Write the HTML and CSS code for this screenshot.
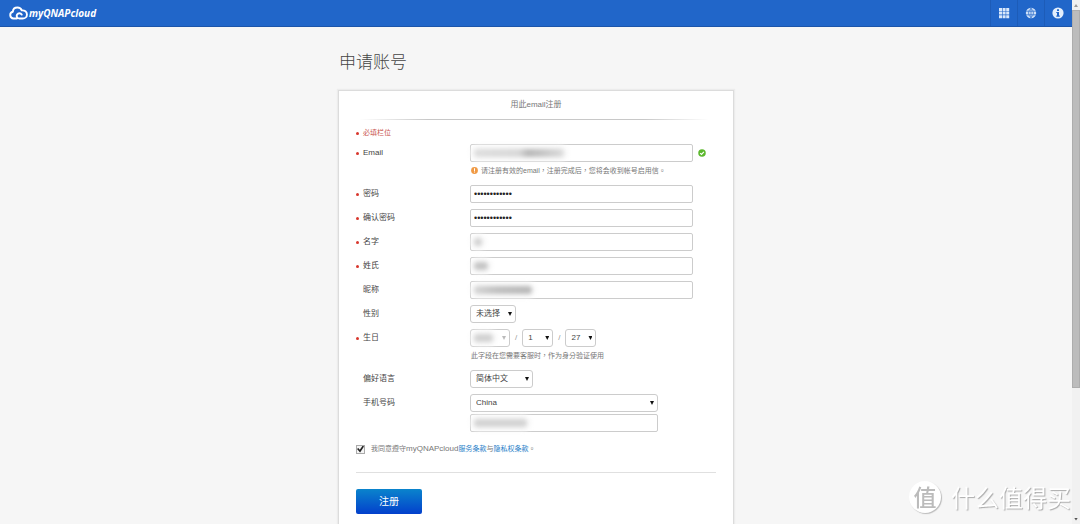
FILE: index.html
```html
<!DOCTYPE html>
<html lang="zh-Hans">
<head>
<meta charset="utf-8">
<title>myQNAPcloud - 申请账号</title>
<meta name="viewport" content="width=device-width, initial-scale=1">
<link rel="stylesheet" href="styles.css">
</head>
<body>
<div class="view">
  <header class="topbar">
    <a class="brand" href="#">
      <svg class="brand-mark" viewBox="0 0 36 26" aria-hidden="true"><path d="M15 23.500H8.500a6.500 6.500 0 0 1-1.200-12.800C7.500 5.500 11.500 2.500 16 2.500c4 0 7 2.200 8.200 5.600 5.600-.6 9.800 2.800 9.800 7.600 0 4.600-3.600 7.800-8 7.800h-6.500a5 5 0 1 1 4.500-7.500" fill="none" stroke="#fff" stroke-width="3.600" stroke-linecap="round" stroke-linejoin="round"/></svg>
      <span>myQNAPcloud</span>
    </a>
    <nav class="tools">
      <button class="tool" type="button" aria-label="应用">
        <svg viewBox="0 0 12 12"><path d="M1 1h3v3H1zM4.600 1h3v3h-3zM8.200 1h3v3h-3zM1 4.600h3v3H1zM4.600 4.600h3v3h-3zM8.200 4.600h3v3h-3zM1 8.200h3v3H1zM4.600 8.200h3v3h-3zM8.200 8.200h3v3h-3z" fill="#d9e8fb"/></svg>
      </button>
      <button class="tool" type="button" aria-label="语言">
        <svg viewBox="0 0 12 12"><circle cx="6" cy="6" r="5.200" fill="#cfe1f8"/><path d="M1 4.200h10M1 7.800h10M6 1v10M6 1.400c-3.200 2.600-3.200 6.600 0 9.200M6 1.400c3.200 2.600 3.200 6.600 0 9.200" fill="none" stroke="#2166c9" stroke-width=".7"/></svg>
      </button>
      <button class="tool" type="button" aria-label="信息">
        <svg viewBox="0 0 12 12"><circle cx="6" cy="6" r="5.600" fill="#e3eefc"/><path d="M5 2.200h2v1.700H5zM4.300 4.900H7v3.700h.8v1.100H4.300V8.600H5V6h-.7z" fill="#2166c9"/></svg>
      </button>
    </nav>
  </header>

  <main class="page">
    <h1 class="page-title">申请账号</h1>
    <form class="card">
      <h2 class="card-title">用此email注册</h2>
      <p class="note required">必填栏位</p>

      <div class="fields">
        <div class="row">
          <label class="label required" for="email">Email</label>
          <div class="control">
            <div class="line">
              <span class="box"><input class="input" id="email" type="email"><i class="smudge smudge-email"></i></span>
              <svg class="ok" viewBox="0 0 16 16" aria-hidden="true"><circle cx="8" cy="8" r="7.500" fill="#5cb82e"/><path d="M4.300 8.200l2.700 2.700 4.800-5" fill="none" stroke="#fff" stroke-width="2.400"/></svg>
            </div>
            <p class="hint" lang="zh-TW"><svg class="warn" viewBox="0 0 14 14" aria-hidden="true"><circle cx="7" cy="7" r="6.800" fill="#f09a45"/><path d="M6 2.600h2v5.200H6zM6 9h2v2H6z" fill="#fff"/></svg>请注册有效的email，注册完成后，您将会收到帐号启用信。</p>
          </div>
        </div>
        <div class="row">
          <label class="label required" for="pw">密码</label>
          <div class="control"><span class="box"><input class="input" id="pw" type="password" value="abcdefghijkl"></span></div>
        </div>
        <div class="row">
          <label class="label required" for="pw2">确认密码</label>
          <div class="control"><span class="box"><input class="input" id="pw2" type="password" value="abcdefghijkl"></span></div>
        </div>
        <div class="row">
          <label class="label required" for="first">名字</label>
          <div class="control"><span class="box"><input class="input" id="first" type="text"><i class="smudge smudge-first"></i></span></div>
        </div>
        <div class="row">
          <label class="label required" for="last">姓氏</label>
          <div class="control"><span class="box"><input class="input" id="last" type="text"><i class="smudge smudge-last"></i></span></div>
        </div>
        <div class="row">
          <label class="label" for="nick">昵称</label>
          <div class="control"><span class="box"><input class="input" id="nick" type="text"><i class="smudge smudge-nick"></i></span></div>
        </div>
        <div class="row">
          <label class="label" for="sex">性别</label>
          <div class="control"><span class="pick pick-sex"><select class="select" id="sex"><option>未选择</option></select></span></div>
        </div>
        <div class="row">
          <label class="label required" for="year">生日</label>
          <div class="control">
            <div class="line date">
              <span class="pick pick-year"><select class="select" id="year"><option></option></select><i class="smudge smudge-year"></i></span>
              <span>/</span>
              <span class="pick pick-day"><select class="select" aria-label="月"><option>1</option></select></span>
              <span>/</span>
              <span class="pick pick-day"><select class="select" aria-label="日"><option>27</option></select></span>
            </div>
            <p class="hint" lang="zh-TW">此字段在您需要客服时，作为身分验证使用</p>
          </div>
        </div>
        <div class="row">
          <label class="label" for="lang">偏好语言</label>
          <div class="control"><span class="pick pick-lang"><select class="select" id="lang"><option>简体中文</option></select></span></div>
        </div>
        <div class="row">
          <label class="label" for="country">手机号码</label>
          <div class="control phone">
            <span class="pick pick-country"><select class="select" id="country"><option>China</option></select></span>
            <span class="box box-phone"><input class="input" type="tel" aria-label="手机号码"><i class="smudge smudge-phone"></i></span>
          </div>
        </div>
      </div>

      <div class="consent" lang="zh-TW">
        <input class="check" id="agree" type="checkbox" checked>
        <p><label for="agree">我同意遵守<span class="latin">myQNAPcloud</span></label><a href="#">服务条款</a>与<a href="#">隐私权条款</a>。</p>
      </div>
      <div class="actions"><button class="submit" type="submit">注册</button></div>
    </form>
  </main>
</div>

<div class="scrollbar" aria-hidden="true"><i class="arrow up"></i><i class="track"><i class="thumb"></i></i><i class="arrow down"></i></div>

<div class="watermark"><span class="seal">值</span><span>什么值得买</span></div>
</body>
</html>
```
FILE: styles.css
```css
* { box-sizing: border-box; }

body {
  margin: 0;
  height: 100vh;
  display: flex;
  overflow: hidden;
  background: #f6f6f6;
  color: #555;
  font: 8px/16px "Liberation Sans", "Noto Sans CJK TC", sans-serif;
}

h1, h2, p { margin: 0; font-weight: 400; }
a { color: #2a7fc9; text-decoration: none; }
input, select, button { margin: 0; font: inherit; color: inherit; }

.view { flex: 1; min-width: 0; overflow: hidden; }

/* Top bar */
.topbar {
  display: flex;
  justify-content: space-between;
  height: 27px;
  background: #2166c9;
  border-bottom: 1px solid #1c55aa;
}
.brand {
  display: flex;
  align-items: center;
  gap: 1px;
  padding-left: 9px;
  color: #fff;
  font: italic 700 10px/26px "Open Sans", sans-serif;
}
.brand-mark { width: 19px; height: 14px; }
.tools { display: flex; padding-right: 1px; }
.tool {
  display: grid;
  place-items: center;
  width: 27px;
  padding: 0;
  border: 0;
  border-left: 1px solid #1d5cb8;
  background: none;
}
.tool svg { width: 12px; height: 12px; }

/* Page and card */
.page { width: 396px; max-width: 100%; margin: 0 auto; padding-top: 22px; }
.page-title {
  padding-left: 1px;
  margin-bottom: 17px;
  color: #444;
  font: 300 17px/24px "Noto Sans CJK SC", sans-serif;
}
.card {
  padding: 5px 17px 24px;
  border: 1px solid #dcdcdc;
  background: #fff;
  box-shadow: 0 0 1px 1px #ececec;
}
.card-title {
  padding-bottom: 6px;
  margin-bottom: 4px;
  color: #777;
  font-size: 8px;
  line-height: 18px;
  text-align: center;
  background: linear-gradient(90deg, transparent 1%, #c8c8c8 20%, #c8c8c8 80%, transparent 98%) bottom / 100% 1px no-repeat;
}
.required::before {
  content: "";
  position: absolute;
  left: 0;
  top: 50%;
  width: 3px;
  height: 3px;
  margin-top: -1px;
  border-radius: 50%;
  background: #d8362c;
}
.note { position: relative; padding-left: 7px; margin: 5px 0 3px; color: #c9564e; font-size: 7px; }

/* Fields */
.fields { display: grid; gap: 6px; }
.row { display: grid; grid-template-columns: 114px 1fr; align-items: start; }
.label { position: relative; padding-left: 7px; line-height: 18px; color: #444; }
.line { display: flex; align-items: center; gap: 5px; }
.box { position: relative; display: block; width: 223px; }
.box-phone { width: 188px; }
.input {
  display: block;
  width: 100%;
  height: 18px;
  padding: 0 3px;
  border: 1px solid #ccc;
  border-radius: 2px;
  background: #fff;
  color: #222;
  font-size: 9px;
}
.ok { width: 8px; height: 8px; }
.hint { display: flex; align-items: center; padding-left: 1px; color: #777; font-size: 7px; line-height: 17px; }
.warn { width: 7px; height: 7px; margin-right: 3px; }

.pick { position: relative; display: block; }
.pick::after {
  content: "";
  position: absolute;
  right: 4px;
  top: 7px;
  width: 4px;
  height: 4px;
  background: #111;
  clip-path: polygon(0 0, 100% 0, 50% 100%);
  pointer-events: none;
}
.select {
  display: block;
  width: 100%;
  height: 18px;
  padding: 0 5px;
  border: 1px solid #ccc;
  border-radius: 3px;
  background: #fff;
  appearance: none;
  color: #444;
}
.pick-sex { width: 46px; }
.pick-year { width: 40px; }
.pick-year::after { background: #bbb; }
.pick-day { width: 31px; }
.pick-lang { width: 63px; }
.pick-country { width: 188px; }
.date { color: #999; }
.phone { display: grid; gap: 2px; }

/* Concealed values */
.smudge {
  position: absolute;
  left: 4px;
  top: 5px;
  height: 8px;
  border-radius: 4px;
  background: #d2d2d2;
  filter: blur(2px);
  box-shadow: 0 0 2px 4px #f8f8f8;
  pointer-events: none;
}
.smudge-email { width: 90px; background: linear-gradient(90deg, #dedede, #d8d8d8 50%, #b8b8b8 60%, #c4c4c4 75%, #dcdcdc); }
.smudge-first { width: 8px; }
.smudge-last { width: 14px; background: #c6c6c6; }
.smudge-nick { width: 58px; background: linear-gradient(90deg, #d6d6d6, #c0c0c0 40%, #b8b8b8); }
.smudge-year { width: 19px; }
.smudge-phone { width: 53px; background: #d4d4d4; }

/* Consent and submit */
.consent { display: flex; align-items: center; gap: 6px; padding: 9px 0 15px; font-size: 7px; color: #777; }
.latin { font-size: 8px; }
.check {
  appearance: none;
  display: grid;
  place-items: center;
  width: 9px;
  height: 9px;
  border: 1px solid #aaa;
  background: #f4f4f4;
}
.check:checked::before {
  content: "";
  width: 7px;
  height: 7px;
  background: #222;
  clip-path: polygon(0 50%, 18% 35%, 40% 60%, 82% 0, 100% 14%, 44% 100%);
}
.actions { padding-top: 16px; border-top: 1px solid #e0e0e0; }
.submit {
  width: 66px;
  height: 25px;
  padding: 0;
  border: 0;
  border-radius: 2px;
  background: linear-gradient(#0a84cc, #0340cc);
  color: #fff;
  font-size: 10px;
}

/* Scrollbar */
.scrollbar { display: flex; flex-direction: column; width: 8px; background: #f1f1f1; }
.arrow { height: 10px; display: grid; place-items: center; }
.arrow::before { content: ""; width: 4px; height: 3px; background: #555; clip-path: polygon(0 0, 100% 0, 50% 100%); }
.up::before { background: #999; transform: rotate(180deg); }
.track { flex: 1; }
.thumb { display: block; width: 100%; height: 75%; border: 1px solid #adadad; background: #bcbcbc; }

/* Watermark */
.watermark {
  position: fixed;
  right: 9px;
  bottom: 11px;
  display: flex;
  align-items: center;
  gap: 10px;
  color: #fff;
  font: 24px/32px "Noto Sans CJK SC", sans-serif;
  text-shadow: 1px 1px 1px #aaa;
  pointer-events: none;
}
.seal {
  width: 32px;
  height: 32px;
  border-radius: 50%;
  background: #fff;
  box-shadow: 1px 1px 1px #bbb;
  color: #bbb;
  font-size: 23px;
  font-weight: 500;
  line-height: 31px;
  text-align: center;
  text-shadow: none;
}
```
